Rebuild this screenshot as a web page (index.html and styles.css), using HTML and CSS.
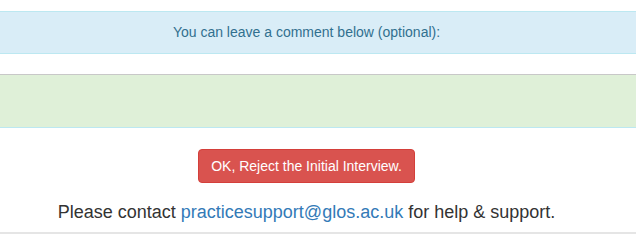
FILE: index.html
```html
<!DOCTYPE html>
<html>
<head>
<meta charset="utf-8">
<link rel="stylesheet" href="styles.css">
</head>
<body>
<div class="page">
  <div class="alert-info"><span class="center">You can leave a comment below (optional):</span></div>
  <div class="comment-box"></div>
  <div class="actions">
    <button class="btn-danger" type="button">OK, Reject the Initial Interview.</button>
  </div>
  <p class="contact">Please contact <a href="#">practicesupport@glos.ac.uk</a> for help &amp; support.</p>
  <hr class="rule">
</div>
</body>
</html>
```
FILE: styles.css
```css
html, body {
  margin: 0;
  padding: 0;
  background: #fff;
}
body {
  font-family: "Liberation Sans", Arial, sans-serif;
  font-size: 14px;
  color: #333;
}
.page {
  padding-top: 11px;
}
.alert-info {
  background: #d9edf7;
  border-top: 1px solid #bce8f1;
  border-bottom: 1px solid #bce8f1;
  color: #31708f;
  padding: 10px 23px 10px 0;
  line-height: 21px;
  text-align: center;
}
.comment-box {
  margin-top: 20px;
  height: 52px;
  background: #dff0d8;
  border-top: 1px solid #c8c8c8;
  border-bottom: 1px solid #bce8f1;
}
.actions {
  margin-top: 21px;
  padding-right: 23px;
  display: flex;
  justify-content: center;
}
.btn-danger {
  font-family: "Liberation Sans", Arial, sans-serif;
  font-size: 14px;
  line-height: 20px;
  color: #fff;
  background: #d9534f;
  border: 1px solid #d43f3a;
  border-radius: 4px;
  padding: 6px 12px;
  margin: 0;
}
.contact {
  margin: 16px 0 0;
  padding-right: 23px;
  text-align: center;
  font-size: 18px;
  line-height: 26px;
}
.contact a {
  color: #337ab7;
  text-decoration: none;
}
.rule {
  margin: 7px 0 0;
  border: 0;
  border-top: 2px solid #e5e5e5;
  height: 0;
}
```
